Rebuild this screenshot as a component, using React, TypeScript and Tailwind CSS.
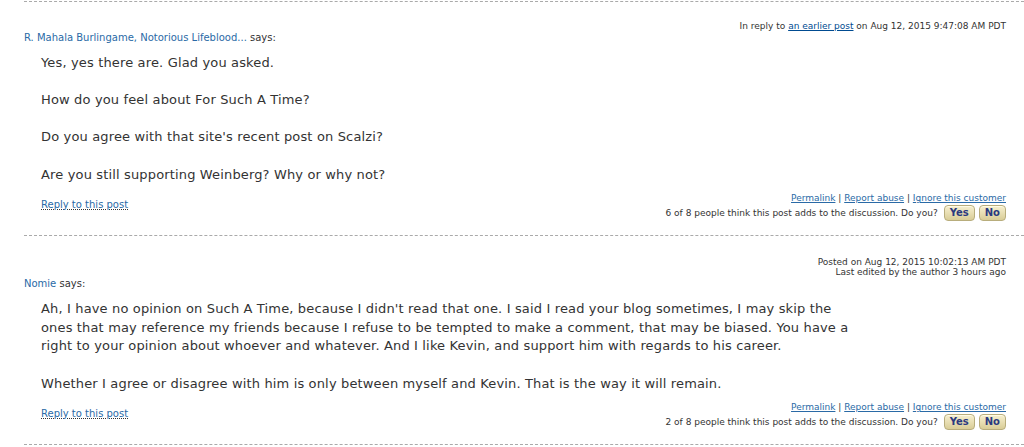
import React from 'react';

interface Post {
  author: string;
  meta: React.ReactNode[];
  paragraphs: string[];
  helpful: number;
  total: number;
  metaTop: string;
}

const VoteButton = ({ label }: { label: string }) => (
  <button className="h-[16px] rounded-[4px] border border-[#b8ad7c] bg-gradient-to-b from-[#f7f0cf] to-[#d9cd97] px-[5px] text-[10px] font-bold leading-[14px] text-[#2b3a80] shadow-[inset_0_1px_0_#fffbe6]">
    {label}
  </button>
);

const posts: Post[] = [
  {
    author: 'R. Mahala Burlingame, Notorious Lifeblood...',
    meta: [
      <span key="a">
        In reply to <a className="text-[#004b91] underline">an earlier post</a> on Aug 12, 2015 9:47:08 AM PDT
      </span>,
    ],
    paragraphs: [
      'Yes, yes there are. Glad you asked.',
      'How do you feel about For Such A Time?',
      "Do you agree with that site's recent post on Scalzi?",
      'Are you still supporting Weinberg? Why or why not?',
    ],
    helpful: 6,
    total: 8,
    metaTop: 'pt-[19px]',
  },
  {
    author: 'Nomie',
    meta: [
      <span key="a">Posted on Aug 12, 2015 10:02:13 AM PDT</span>,
      <span key="b">Last edited by the author 3 hours ago</span>,
    ],
    paragraphs: [
      "Ah, I have no opinion on Such A Time, because I didn't read that one. I said I read your blog sometimes, I may skip the ones that may reference my friends because I refuse to be tempted to make a comment, that may be biased. You have a right to your opinion about whoever and whatever. And I like Kevin, and support him with regards to his career.",
      'Whether I agree or disagree with him is only between myself and Kevin. That is the way it will remain.',
    ],
    helpful: 2,
    total: 8,
    metaTop: 'pt-[21px]',
  },
];

const App = () => {
  return (
    <div className="min-h-[447px] w-[1024px] overflow-hidden bg-white pl-[24px] pr-[18px] text-[#333] font-['DejaVu_Sans','Verdana',sans-serif]">
      <div className="mt-[1px]">
        {posts.map((post, i) => (
          <div key={i} className={`border-t border-dashed border-[#aaa] ${post.metaTop} pb-[14px] -mr-[18px] pr-[18px]`}>
            <div className="flex flex-col items-end text-[9px] leading-[10px]">
              {post.meta}
            </div>
            <div className="mt-[1px] text-[10px] leading-[12px]">
              <span className="text-[#2a6aa6]">{post.author}</span> says:
            </div>
            <div className="mt-[10px] w-[834px] pl-[17px] text-[13px] leading-[18.6px] tracking-[0.15px]">
              {post.paragraphs.map((p, j) => (
                <p key={j} className={j > 0 ? 'mt-[18.6px]' : ''}>
                  {p}
                </p>
              ))}
            </div>
            <div className="mt-[9px] flex items-start justify-between">
              <a className="mt-[6px] pl-[17px] text-[10px] leading-[12px] text-[#2a6aa6] underline decoration-dotted decoration-[#333]">
                Reply to this post
              </a>
              <div className="flex flex-col items-end text-[9px]">
                <div className="leading-[11px]">
                  <a className="text-[#2a6aa6] underline">Permalink</a> |{' '}
                  <a className="text-[#2a6aa6] underline">Report abuse</a> |{' '}
                  <a className="text-[#2a6aa6] underline">Ignore this customer</a>
                </div>
                <div className="mt-[1px] flex items-center gap-[4px] leading-[16px]">
                  <span className="mr-[2px]">
                    {post.helpful} of {post.total} people think this post adds to the discussion. Do you?
                  </span>
                  <VoteButton label="Yes" />
                  <VoteButton label="No" />
                </div>
              </div>
            </div>
          </div>
        ))}
        <div className="-mr-[18px] border-t border-dashed border-[#aaa]" />
      </div>
    </div>
  );
};

export default App;
